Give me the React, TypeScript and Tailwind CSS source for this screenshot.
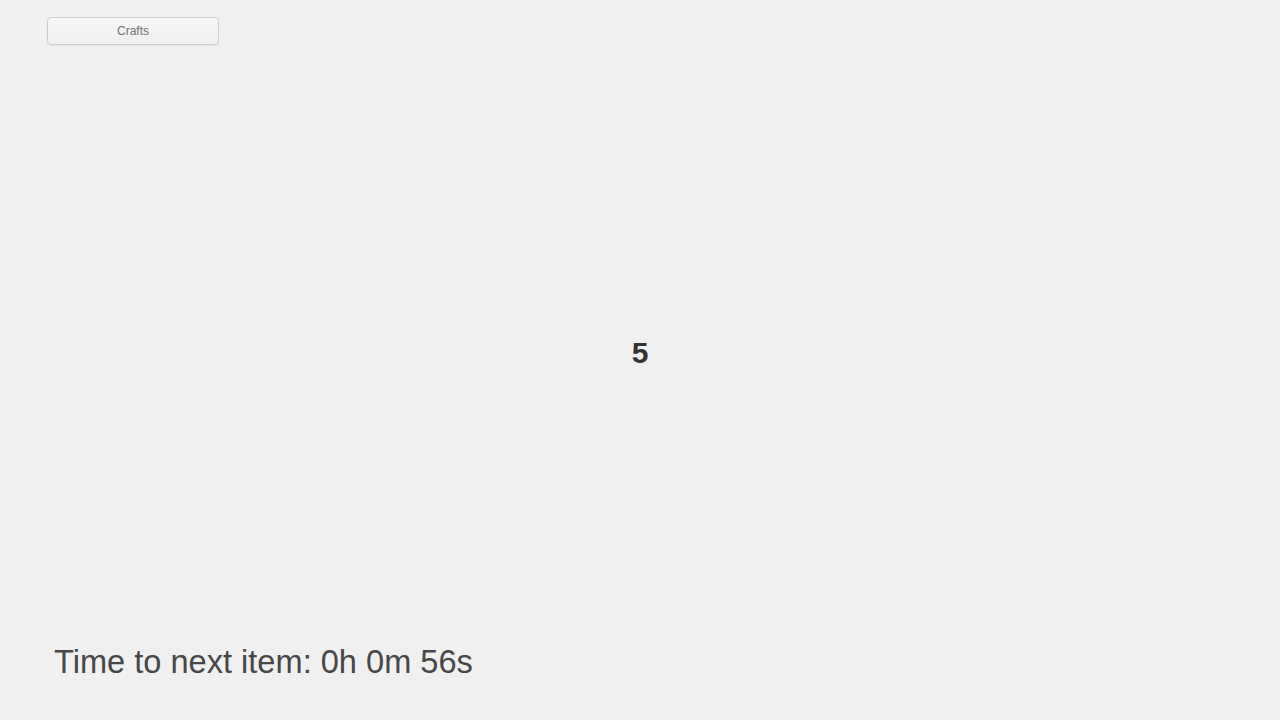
export default function App() {
  return (
    <div className="flex h-screen w-full flex-col bg-[#f0f0f0] font-['Liberation_Sans',Arial,sans-serif]">
      <div className="pl-[47px] pt-[17px]">
        <button className="flex h-[28px] w-[172px] items-center justify-center rounded-[4px] border border-[#cdcdcd] bg-gradient-to-b from-[#f7f7f7] to-[#efefef] text-[12px] text-[#707070] shadow-[0_1px_1px_rgba(0,0,0,0.05)]">
          Crafts
        </button>
      </div>
      <div className="flex flex-1 items-center justify-center pt-[17px]">
        <span className="text-[30px] font-bold leading-none text-[#333333]">5</span>
      </div>
      <div className="pb-[40px] pl-[54px]">
        <p className="text-[32.6px] leading-[37px] text-[#474747]">Time to next item: 0h 0m 56s</p>
      </div>
    </div>
  );
}
